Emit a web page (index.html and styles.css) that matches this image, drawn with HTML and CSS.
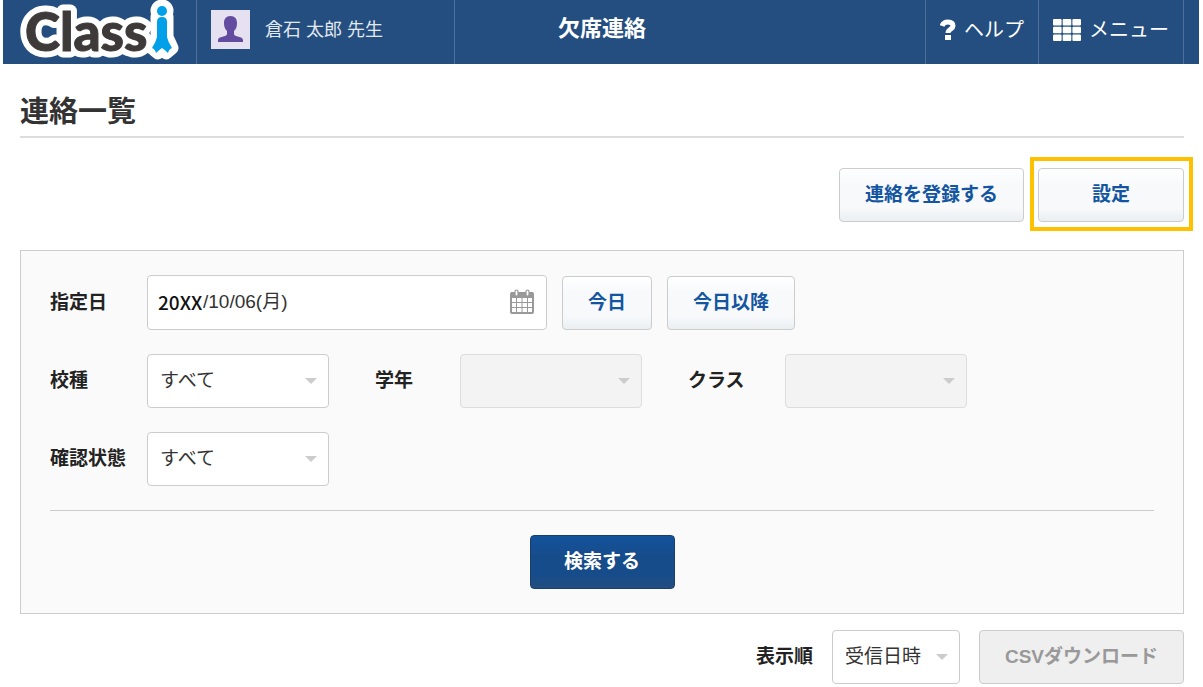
FILE: index.html
```html
<!DOCTYPE html>
<html lang="ja">
<head>
    <meta charset="UTF-8">
    <meta name="viewport" content="width=device-width, initial-scale=1.0">
    <title>欠席連絡</title>
    <link rel="stylesheet" href="styles.css">
</head>
<body>
    <header class="header">
        <a class="logo" href="#" aria-label="Classi">
            <svg width="160" height="64" viewBox="20 0 160 64">
                <g class="logo-outline">
                    <text x="25" y="51">Class</text>
                    <circle cx="162" cy="11" r="5"/>
                    <path d="M157 17 H167 V37 L172 48 L166 53 L162 49 L158 53 L152 48 L157 37 Z"/>
                </g>
                <text class="logo-text" x="25" y="51">Class</text>
                <g class="logo-person">
                    <circle cx="162" cy="11" r="5"/>
                    <path d="M157 22 Q157 17 162 17 Q167 17 167 22 V37 Q168 42 172 48 Q169 49 168 53 Q165 50 162 48 Q159 50 156 53 Q155 49 152 48 Q156 42 157 37 Z"/>
                </g>
            </svg>
        </a>
        <div class="user">
            <svg class="avatar" width="39" height="39" viewBox="0 0 39 39">
                <rect width="39" height="39" fill="#e6e1f0"/>
                <path d="M19.500 6 C24 6 26 9 26 13 C26 17 25 19 23 21 V24 C23 27 32 26 32 30 V32 H7 V30 C7 26 16 27 16 24 V21 C14 19 13 17 13 13 C13 9 15 6 19.500 6 Z" fill="#634b9f"/>
            </svg>
            <span>倉石 太郎 先生</span>
        </div>
        <div class="header-title">欠席連絡</div>
        <a class="nav-link" href="#">
            <svg width="16" height="21" viewBox="0 0 16 21">
                <path d="M2 7 C3 4 5 3 8 3 C11 3 13 4 13 7 C13 10 8 10 8 14" fill="none" stroke="#fff" stroke-width="5"/>
                <rect x="5" y="16" width="6" height="5" fill="#fff"/>
            </svg>
            <span>ヘルプ</span>
        </a>
        <a class="nav-link nav-menu" href="#">
            <svg width="28" height="22" viewBox="0 0 28 22" fill="#fff">
                <rect x="0" y="0" width="8.600" height="6.400" rx="1"/>
                <rect x="9.700" y="0" width="8.600" height="6.400" rx="1"/>
                <rect x="19.400" y="0" width="8.600" height="6.400" rx="1"/>
                <rect x="0" y="7.800" width="8.600" height="6.400" rx="1"/>
                <rect x="9.700" y="7.800" width="8.600" height="6.400" rx="1"/>
                <rect x="19.400" y="7.800" width="8.600" height="6.400" rx="1"/>
                <rect x="0" y="15.600" width="8.600" height="6.400" rx="1"/>
                <rect x="9.700" y="15.600" width="8.600" height="6.400" rx="1"/>
                <rect x="19.400" y="15.600" width="8.600" height="6.400" rx="1"/>
            </svg>
            <span>メニュー</span>
        </a>
    </header>

    <main class="content">
        <h1>連絡一覧</h1>

        <div class="actions">
            <button type="button" class="btn">連絡を登録する</button>
            <div class="highlight">
                <button type="button" class="btn btn-settings">設定</button>
            </div>
        </div>

        <form class="search-panel">
            <div class="form-row">
                <label class="first-label" for="year">指定日</label>
                <div class="date-box">
                    <input type="text" class="date-year" id="year" value="20XX">
                    <input type="text" class="date-day" aria-label="月日" value="/10/06(月)">
                    <svg width="24" height="26" viewBox="0 0 24 26">
                        <rect x="1" y="4" width="22" height="20" rx="1" fill="#fff" stroke="#999" stroke-width="2"/>
                        <path d="M1 3 H23 V9 H1 Z" fill="#999"/>
                        <path d="M6.500 8 V24 M12 8 V24 M17.500 8 V24 M1 13.500 H23 M1 18.500 H23" stroke="#999" stroke-width="1"/>
                        <rect x="5" y="1" width="3" height="6" rx="1.500" fill="#fff" stroke="#999" stroke-width="1.200"/>
                        <rect x="16" y="1" width="3" height="6" rx="1.500" fill="#fff" stroke="#999" stroke-width="1.200"/>
                    </svg>
                </div>
                <button type="button" class="btn btn-date">今日</button>
                <button type="button" class="btn btn-date">今日以降</button>
            </div>

            <div class="form-row">
                <label class="first-label" for="school">校種</label>
                <div class="select-box">
                    <select id="school"><option>すべて</option></select>
                </div>
                <label class="next-label" for="grade">学年</label>
                <div class="select-box">
                    <select id="grade" disabled></select>
                </div>
                <label class="next-label wide-label" for="class">クラス</label>
                <div class="select-box">
                    <select id="class" disabled></select>
                </div>
            </div>

            <div class="form-row">
                <label class="first-label" for="status">確認状態</label>
                <div class="select-box">
                    <select id="status"><option>すべて</option></select>
                </div>
            </div>

            <div class="submit-row">
                <button type="button" class="btn btn-primary">検索する</button>
            </div>
        </form>

        <div class="list-tools">
            <label for="sort">表示順</label>
            <div class="select-box sort-box">
                <select id="sort"><option>受信日時</option></select>
            </div>
            <button type="button" class="btn" disabled>CSVダウンロード</button>
        </div>
    </main>
</body>
</html>
```
FILE: styles.css
```css
* {
    box-sizing: border-box;
}

body {
    margin: 0;
    background-color: #fff;
    color: #333;
    font-family: "Liberation Sans", "Noto Sans CJK JP", sans-serif;
    font-size: 19px;
    line-height: 28px;
}

button,
input,
select {
    font-family: inherit;
    font-size: 19px;
    line-height: 28px;
    color: #333;
}

/* Header */
.header {
    display: flex;
    height: 64px;
    margin: 0 4px 0 3px;
    padding-right: 15px;
    background-color: #234e7f;
    color: #fff;
}

.logo {
    width: 194px;
    padding-left: 17px;
    border-right: 1px solid #4f6f96;
}

.logo svg {
    display: block;
}

.logo text {
    font-family: Lato, sans-serif;
    font-size: 53px;
    font-weight: 900;
}

.logo-outline {
    fill: #fff;
    stroke: #fff;
    stroke-width: 13px;
    stroke-linejoin: round;
}

.logo-text {
    fill: #3e3a39;
    stroke: #3e3a39;
    stroke-width: 1px;
}

.logo-person {
    fill: #00a0e9;
}

.user {
    display: flex;
    align-items: center;
    gap: 15px;
    width: 258px;
    padding: 0 14px 5px;
    border-right: 1px solid #4f6f96;
    font-size: 18px;
    color: #e3e9f0;
}

.header-title {
    flex: 1;
    padding: 15px 176px 0 0;
    text-align: center;
    font-size: 22px;
    font-weight: bold;
}

.nav-link {
    display: flex;
    align-items: center;
    gap: 8px;
    padding: 0 14px 5px;
    border-left: 1px solid #4f6f96;
    color: #fff;
    font-size: 20px;
    text-decoration: none;
}

.nav-menu {
    border-right: 1px solid #4f6f96;
}

/* Page */
.content {
    margin: 0 19px 0 20px;
}

h1 {
    margin: 0 0 30px;
    padding: 29px 0 5px;
    border-bottom: 2px solid #ddd;
    font-size: 29px;
    line-height: 38px;
}

label {
    font-weight: bold;
    color: #222;
}

.actions {
    display: flex;
    justify-content: flex-end;
    gap: 14px;
    margin-bottom: 28px;
}

.btn {
    height: 54px;
    padding: 0 25px;
    border: 1px solid #ccc;
    border-radius: 4px;
    background: linear-gradient(#fff, #f7f9fb 30%, #f7f9fb 75%, #ebeff1);
    color: #1355a0;
    font-weight: bold;
    white-space: nowrap;
    cursor: pointer;
}

.btn-settings {
    width: 146px;
}

.btn-primary {
    width: 145px;
    border-color: #1a3f6c;
    background: linear-gradient(#13529b, #174c8b 40%, #174c8b 75%, #234e7f);
    color: #fff;
}

.btn:disabled {
    background: #efefef;
    color: #999;
    cursor: default;
}

.highlight {
    position: relative;
}

.highlight::after {
    content: "";
    position: absolute;
    top: -11px;
    right: -9px;
    bottom: -9px;
    left: -8px;
    border: 4px solid #ffc000;
    pointer-events: none;
}

/* Search form */
.search-panel {
    padding: 24px 29px;
    border: 1px solid #ccc;
    background-color: #fafafa;
}

.form-row {
    display: flex;
    align-items: center;
    margin-bottom: 24px;
}

.first-label {
    width: 97px;
}

.next-label {
    width: 85px;
    margin-left: 46px;
}

.wide-label {
    width: 97px;
}

.date-box {
    display: flex;
    align-items: center;
    width: 400px;
    height: 55px;
    padding: 0 12px 2px 10px;
    border: 1px solid #ccc;
    border-radius: 4px;
    background-color: #fff;
}

.date-box input {
    padding: 0;
    border: none;
    background: none;
    outline: none;
}

.date-box .date-year {
    width: 45px;
    font-family: "Noto Sans CJK JP", sans-serif;
    font-weight: 500;
    color: #111;
}

.date-box .date-day {
    flex: 1;
    min-width: 0;
}

.btn-date {
    margin-left: 15px;
}

.select-box {
    position: relative;
    width: 182px;
}

.select-box::after {
    content: "";
    position: absolute;
    top: 24px;
    right: 12px;
    border: 6px solid transparent;
    border-top-color: #ccc;
    border-bottom: none;
    pointer-events: none;
}

select {
    display: block;
    width: 100%;
    height: 54px;
    padding: 0 12px;
    border: 1px solid #ccc;
    border-radius: 4px;
    background-color: #fff;
    appearance: none;
}

select:disabled {
    border-color: #ddd;
    background-color: #f3f3f3;
    opacity: 1;
}

.submit-row {
    padding-top: 24px;
    border-top: 1px solid #ccc;
    text-align: center;
}

.submit-row .btn {
    display: block;
    margin: 0 auto;
}

/* List tools */
.list-tools {
    display: flex;
    justify-content: flex-end;
    align-items: center;
    gap: 19px;
    margin-top: 16px;
}

.sort-box {
    width: 128px;
}
```
